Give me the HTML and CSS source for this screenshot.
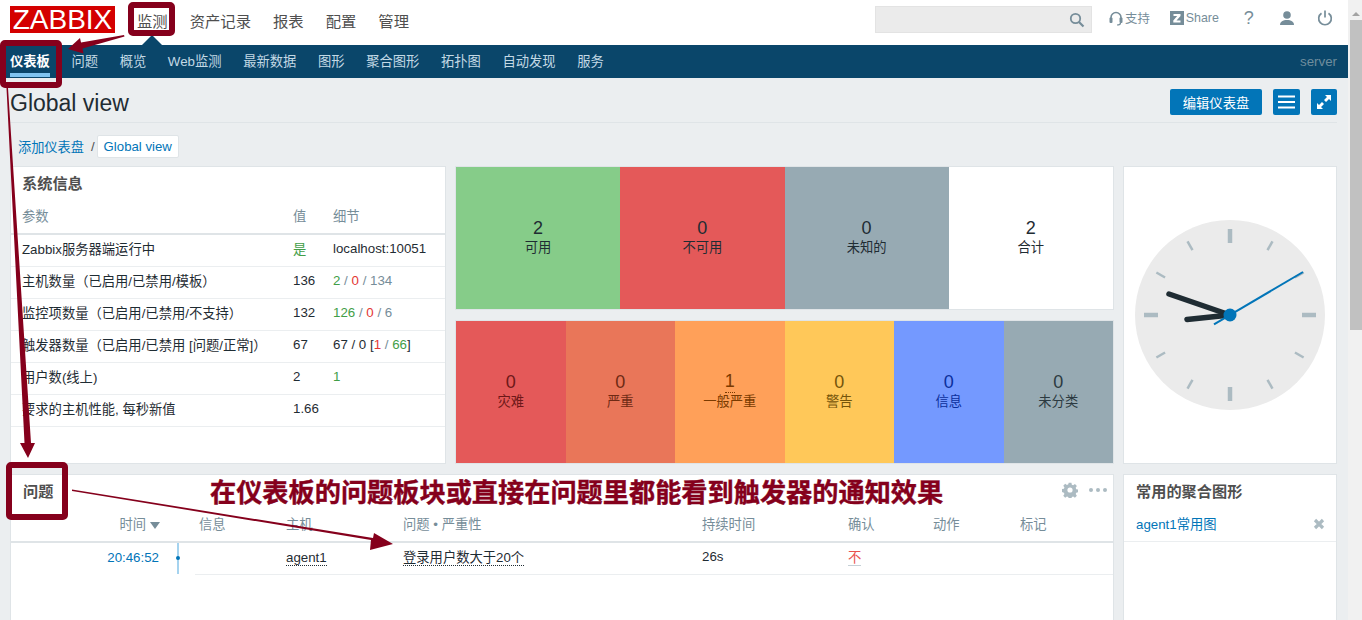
FILE: index.html
```html
<!DOCTYPE html>
<html lang="zh-CN">
<head>
  <meta charset="UTF-8">
  <title>Global view - Zabbix</title>
  <link rel="stylesheet" href="styles.css">
</head>
<body>

  <div id="page">
    <div id="top-bar">
      <div class="logo">ZABBIX</div>
      <div class="top-menu">
        <a class="top-item selected">监测</a>
        <a class="top-item">资产记录</a>
        <a class="top-item">报表</a>
        <a class="top-item">配置</a>
        <a class="top-item">管理</a>
      </div>
      <div class="search-box">
        <svg class="search-icon" width="16" height="16" viewBox="0 0 16 16"><circle cx="6.5" cy="6.5" r="4.7" fill="none" stroke="#768d99" stroke-width="1.8"/><path d="M10 10l4.5 4.5" stroke="#768d99" stroke-width="2.2"/></svg>
      </div>
      <div class="top-tools">
        <a class="tool tool-support">
          <svg width="14" height="15" viewBox="0 0 14 15"><path d="M2 8V6.5a5 5 0 0 1 10 0V8" fill="none" stroke="#768d99" stroke-width="1.6"/><rect x="0.5" y="6.5" width="3" height="5.5" rx="1" fill="#768d99"/><rect x="10.5" y="6.5" width="3" height="5.5" rx="1" fill="#768d99"/><path d="M11.5 12c0 1.5-1.5 2-3.5 2" fill="none" stroke="#768d99" stroke-width="1.2"/></svg>
          支持
        </a>
        <a class="tool tool-share">
          <svg width="14" height="14" viewBox="0 0 14 14"><rect width="14" height="14" fill="#768d99"/><path d="M3.5 3h7v2L6.5 9.5h4V11.5h-7.2V9.5L7.2 5H3.5z" fill="#fff"/></svg>
          Share
        </a>
        <a class="tool-help">?</a>
        <a class="tool-icon">
          <svg width="16" height="15" viewBox="0 0 16 15"><circle cx="8" cy="4" r="3.8" fill="#768d99"/><path d="M1 14c0-3.500 3-5 7-5s7 1.500 7 5z" fill="#768d99"/></svg>
        </a>
        <a class="tool-icon">
          <svg width="16" height="16" viewBox="0 0 16 16"><path d="M4.500 3.200a6.300 6.300 0 1 0 7 0" fill="none" stroke="#768d99" stroke-width="1.700"/><path d="M8 0.500v7" stroke="#768d99" stroke-width="1.700"/></svg>
        </a>
      </div>
    </div>

    <div id="nav-bar">
      <a class="nav-item active">仪表板</a>
      <a class="nav-item">问题</a>
      <a class="nav-item">概览</a>
      <a class="nav-item">Web监测</a>
      <a class="nav-item">最新数据</a>
      <a class="nav-item">图形</a>
      <a class="nav-item">聚合图形</a>
      <a class="nav-item">拓扑图</a>
      <a class="nav-item">自动发现</a>
      <a class="nav-item">服务</a>
      <span class="server-name">server</span>
    </div>

    <div id="title-bar">
      <h1>Global view</h1>
      <div class="title-actions">
        <button class="btn btn-edit">编辑仪表盘</button>
        <button class="btn btn-icon">
          <svg width="17" height="14" viewBox="0 0 17 14"><path d="M0 1.500h17M0 7h17M0 12.500h17" stroke="#fff" stroke-width="2"/></svg>
        </button>
        <button class="btn btn-icon btn-full">
          <svg width="16" height="16" viewBox="0 0 16 16"><path d="M9 1h6v6l-2-2-3 3-2-2 3-3zM7 15H1V9l2 2 3-3 2 2-3 3z" fill="#fff"/></svg>
        </button>
      </div>
    </div>

    <div id="crumbs">
      <a class="crumb-link">添加仪表盘</a>
      <span class="crumb-sep">/</span>
      <a class="crumb-tab">Global view</a>
    </div>

    <div id="dashboard">
      <div class="panel panel-sys">
        <div class="panel-head">系统信息</div>
        <table class="sys-table">
          <colgroup><col class="c-param"><col class="c-value"><col></colgroup>
          <thead>
            <tr><th>参数</th><th>值</th><th>细节</th></tr>
          </thead>
          <tbody>
            <tr><td>Zabbix服务器端运行中</td><td class="green">是</td><td>localhost:10051</td></tr>
            <tr><td>主机数量（已启用/已禁用/模板）</td><td>136</td><td><span class="green">2</span> <span class="grey">/</span> <span class="red">0</span> <span class="grey">/ 134</span></td></tr>
            <tr><td>监控项数量（已启用/已禁用/不支持）</td><td>132</td><td><span class="green">126</span> <span class="grey">/</span> <span class="red">0</span> <span class="grey">/ 6</span></td></tr>
            <tr><td>触发器数量（已启用/已禁用 [问题/正常]）</td><td>67</td><td>67 / 0 [<span class="red">1</span> <span class="grey">/</span> <span class="green">66</span>]</td></tr>
            <tr><td>用户数(线上)</td><td>2</td><td class="green">1</td></tr>
            <tr><td>要求的主机性能, 每秒新值</td><td>1.66</td><td></td></tr>
          </tbody>
        </table>
      </div>

      <div class="panel tiles">
        <div class="tile t-green"><b>2</b><span>可用</span></div>
        <div class="tile t-red"><b>0</b><span>不可用</span></div>
        <div class="tile t-grey"><b>0</b><span>未知的</span></div>
        <div class="tile t-white"><b>2</b><span>合计</span></div>
      </div>

      <div class="panel panel-clock">
        <svg width="190" height="190" viewBox="-95 -95 190 190">
          <circle r="95" fill="#ebebeb"/>
          <g stroke="#acbbc2" stroke-width="4.500">
            <line y1="-86" y2="-72"/>
            <line x1="86" x2="72"/>
            <line y1="86" y2="72"/>
            <line x1="-86" x2="-72"/>
          </g>
          <g stroke="#acbbc2" stroke-width="2.500">
            <line y1="-85" y2="-75" transform="rotate(30)"/>
            <line y1="-85" y2="-75" transform="rotate(60)"/>
            <line y1="-85" y2="-75" transform="rotate(120)"/>
            <line y1="-85" y2="-75" transform="rotate(150)"/>
            <line y1="-85" y2="-75" transform="rotate(210)"/>
            <line y1="-85" y2="-75" transform="rotate(240)"/>
            <line y1="-85" y2="-75" transform="rotate(300)"/>
            <line y1="-85" y2="-75" transform="rotate(330)"/>
          </g>
          <g stroke="#1f2c33" stroke-width="5.500" stroke-linecap="round">
            <line x2="-61" y2="-21"/>
            <line x2="-43" y2="4.500"/>
          </g>
          <line x1="-16" y1="9.300" x2="73" y2="-43" stroke="#0275b8" stroke-width="2"/>
          <circle r="6.500" fill="#0275b8"/>
        </svg>
      </div>

      <div class="panel tiles tiles-sev">
        <div class="tile s-disaster"><b>0</b><span>灾难</span></div>
        <div class="tile s-high"><b>0</b><span>严重</span></div>
        <div class="tile s-average"><b class="dotted">1</b><span>一般严重</span></div>
        <div class="tile s-warning"><b>0</b><span>警告</span></div>
        <div class="tile s-info"><b>0</b><span>信息</span></div>
        <div class="tile s-none"><b>0</b><span>未分类</span></div>
      </div>

      <div class="panel panel-problems">
        <div class="panel-head head-tools">
          问题
          <div class="head-icons">
            <svg width="16" height="16" viewBox="0 0 16 16"><path d="M6.500 0h3l.4 2.200 1.500.6L13.300 1.500l2.100 2.100-1.300 1.900.6 1.500 2.200.4v3l-2.200.4-.6 1.500 1.300 1.900-2.100 2.100-1.900-1.300-1.500.6-.4 2.200h-3l-.4-2.200-1.500-.6-1.900 1.300-2.100-2.100 1.300-1.900-.6-1.500L-.9 10V7l2.200-.4.6-1.500L.6 3.200 2.700 1.100l1.900 1.300 1.500-.6z" transform="translate(.7 .7) scale(.92)" fill="#acbbc2"/><circle cx="8" cy="8" r="2.600" fill="#fff"/></svg>
            <svg width="18" height="4" viewBox="0 0 18 4"><circle cx="2" cy="2" r="2" fill="#acbbc2"/><circle cx="9" cy="2" r="2" fill="#acbbc2"/><circle cx="16" cy="2" r="2" fill="#acbbc2"/></svg>
          </div>
        </div>
        <table class="prob-table">
          <colgroup>
            <col class="p-time"><col class="p-line"><col class="p-info"><col class="p-host"><col class="p-name"><col class="p-dur"><col class="p-ack"><col class="p-act"><col>
          </colgroup>
          <thead>
            <tr>
              <th class="time-cell">时间<i class="sort-down"></i></th>
              <th></th>
              <th class="info-cell">信息</th>
              <th>主机</th>
              <th>问题 • 严重性</th>
              <th>持续时间</th>
              <th>确认</th>
              <th>动作</th>
              <th>标记</th>
            </tr>
          </thead>
          <tbody>
            <tr>
              <td class="time-cell plain"><a class="link">20:46:52</a></td>
              <td class="line-cell plain"><div class="timeline"></div></td>
              <td></td>
              <td class="host-cell"><span class="dot-link">agent1</span></td>
              <td><span class="dot-link">登录用户数大于20个</span></td>
              <td>26s</td>
              <td><span class="ack-no">不</span></td>
              <td></td>
              <td></td>
            </tr>
          </tbody>
        </table>
      </div>

      <div class="panel panel-favs">
        <div class="panel-head">常用的聚合图形</div>
        <div class="fav-row">
          <a class="link">agent1常用图</a>
          <svg width="12" height="12" viewBox="0 0 12 12"><path d="M2 2l8 8M10 2l-8 8" stroke="#acbbc2" stroke-width="3.200"/></svg>
        </div>
      </div>
    </div>
  </div>

  <div id="scrollbar">
    <div class="scroll-up"></div>
    <div class="scroll-thumb"></div>
  </div>

  <!-- red notes drawn over the screenshot -->
  <svg id="notes" width="1362" height="620" viewBox="0 0 1362 620">
    <g fill="none" stroke="#85001c" stroke-width="6">
      <rect x="131" y="5" width="41" height="28" rx="2"/>
      <rect x="3" y="43" width="56" height="42" rx="2"/>
      <rect x="9" y="465" width="56" height="52" rx="2"/>
    </g>
    <g fill="#85001c">
      <path d="M124 35l.5 1.500-42 12 1 5-15.500-4.500 12-11 1 4.500z"/>
      <path d="M6.500 88h1.500l23 355h4l-7 15-8-15h4.500z"/>
      <path d="M72 489.500v1.500l299 49-1 10 23-6-19-11-1 5z"/>
    </g>
  </svg>
  <div id="note-text">在仪表板的问题板块或直接在问题里都能看到触发器的通知效果</div>

</body>
</html>
```

FILE: styles.css
```css
* {
  box-sizing: border-box;
  margin: 0;
  padding: 0;
}

html, body {
  height: 100%;
  overflow: hidden;
}

body {
  display: flex;
  background: #ebeef0;
  color: #1f2c33;
  font-family: "Liberation Sans", "Noto Sans CJK SC", sans-serif;
  font-size: 13.3px;
}

#page {
  width: 1348px;
  flex: none;
  height: 620px;
  overflow: hidden;
}

/* top bar */
#top-bar {
  height: 45px;
  background: #fff;
  display: flex;
  align-items: flex-start;
  padding-left: 10px;
}

.logo {
  width: 105px;
  height: 27px;
  margin-top: 6px;
  background: #d40000;
  color: #fff;
  font-size: 28px;
  line-height: 27px;
  text-align: center;
}

.top-menu {
  display: flex;
  gap: 22px;
  margin-left: 22px;
  padding-top: 13px;
}

.top-item {
  font-size: 15.33px;
  line-height: 18px;
  color: #4f4f4f;
}

.search-box {
  width: 217px;
  height: 27px;
  margin-top: 6px;
  margin-left: auto;
  background: #ebebeb;
  border: 1px solid #e3e3e3;
  display: flex;
  align-items: center;
  justify-content: flex-end;
  padding-right: 6px;
}

.top-tools {
  width: 256px;
  height: 36px;
  display: flex;
  align-items: center;
  padding-left: 17px;
  color: #768d99;
  font-size: 12.4px;
  white-space: nowrap;
}

.tool {
  display: flex;
  align-items: center;
  gap: 2px;
}

.tool-share {
  margin-left: 20px;
}

.tool-help {
  margin-left: 25px;
  font-size: 18px;
}

.tool-icon {
  display: flex;
  margin-left: 22px;
}

.tool-help + .tool-icon {
  margin-left: 25px;
}

/* blue menu */
#nav-bar {
  height: 33px;
  background: #0a466a;
  display: flex;
  padding: 0 11px 0 10px;
  gap: 21.6px;
  position: relative;
}

#nav-bar::before {
  content: "";
  position: absolute;
  left: 142px;
  top: -10px;
  border: 10px solid transparent;
  border-top: 0;
  border-bottom-color: #0a466a;
}

.nav-item {
  color: #c3d9e5;
  line-height: 33px;
}

.nav-item.active {
  color: #fff;
  font-weight: bold;
  height: 32px;
  border-bottom: 4px solid #7fc4f0;
}

.server-name {
  margin-left: auto;
  color: #6f8d9d;
  line-height: 33px;
}

/* title */
#title-bar {
  height: 45px;
  margin: 0 11px 0 10px;
  border-bottom: 1px solid #dfe4e7;
  display: flex;
  align-items: flex-start;
  justify-content: space-between;
}

#title-bar h1 {
  font-size: 23px;
  font-weight: normal;
  line-height: 28px;
  margin-top: 11px;
}

.title-actions {
  display: flex;
  gap: 11px;
  padding-top: 11px;
}

.btn {
  height: 26px;
  border: none;
  border-radius: 2px;
  background: #0275b8;
  color: #fff;
  font: inherit;
  display: flex;
  align-items: center;
  justify-content: center;
}

.btn-edit {
  width: 92px;
}

.btn-icon {
  width: 27px;
}

.btn-full {
  width: 26px;
}

#crumbs {
  display: flex;
  align-items: center;
  height: 22px;
  margin-top: 12px;
  padding-left: 18px;
  font-size: 13.2px;
}

.crumb-link, .link {
  color: #0275b8;
}

.crumb-sep {
  margin: 0 2px 0 7px;
  color: #4f4f4f;
}

.crumb-tab {
  height: 23px;
  line-height: 21px;
  padding: 0 6px;
  background: #fff;
  border: 1px solid #dfe4e7;
  border-radius: 2px;
  color: #0275b8;
}

/* dashboard grid */
#dashboard {
  display: grid;
  grid-template-columns: 436px 659px 214px;
  grid-template-rows: 144px 144px 200px;
  column-gap: 9px;
  row-gap: 10px;
  padding-left: 10px;
  margin-top: 9px;
}

.panel {
  background: #fff;
  border: 1px solid #dfe4e7;
}

.panel-head {
  height: 33px;
  padding-left: 11px;
  line-height: 34px;
  font-size: 15.2px;
  font-weight: bold;
  color: #4f4f4f;
}

.panel-sys, .panel-clock {
  grid-row: span 2;
}

.panel-clock {
  display: flex;
  align-items: center;
  justify-content: center;
}

.panel-problems {
  grid-column: span 2;
  order: 1;
}

.panel-favs {
  order: 1;
}

/* tables */
table {
  width: 100%;
  border-collapse: collapse;
  table-layout: fixed;
}

th {
  text-align: left;
  font-weight: normal;
  color: #768d99;
  padding: 0 0 3px 10px;
  border-bottom: 2px solid #dfe4e7;
}

td {
  padding: 0 0 3px 10px;
  border-bottom: 1px solid #ebeef0;
  white-space: nowrap;
}

.sys-table th {
  height: 34px;
}

.sys-table td {
  height: 32px;
}

.sys-table th:first-child, .sys-table td:first-child {
  padding-left: 11px;
}

.c-param {
  width: 272px;
}

.c-value {
  width: 40px;
}

.green {
  color: #429e47;
}

.red {
  color: #e33734;
}

.grey {
  color: #768d99;
}

/* status tiles */
.tiles {
  display: flex;
}

.tile {
  flex: 1;
  display: flex;
  flex-direction: column;
  align-items: center;
  justify-content: center;
  padding-bottom: 2px;
}

.tile b {
  font-size: 18px;
  font-weight: normal;
  line-height: 22px;
}

.tile span {
  line-height: 18px;
}

.tile .dotted {
  height: 22px;
  line-height: 20px;
  border-bottom: 1px dotted #7a3a00;
}

.t-green { background: #86cc89; }
.t-red { background: #e45959; }
.t-grey { background: #97aab3; }
.t-white { background: #fff; }

.s-disaster { background: #e45959; color: #6d1818; }
.s-high { background: #e97659; color: #6e2a14; }
.s-average { background: #ffa059; color: #7a3a00; }
.s-warning { background: #ffc859; color: #75540a; }
.s-info { background: #7499ff; color: #0b2f9c; }
.s-none { background: #97aab3; color: #2c3a41; }

/* problems */
.head-tools {
  display: flex;
  justify-content: space-between;
  padding-left: 12px;
  padding-right: 6px;
}

.head-icons {
  display: flex;
  align-items: center;
  gap: 11px;
  height: 30px;
}

.prob-table th {
  height: 34px;
}

.prob-table td {
  height: 31px;
}

.p-time { width: 159px; }
.p-line { width: 25px; }
.p-info { width: 81px; }
.p-host { width: 117px; }
.p-name { width: 299px; }
.p-dur { width: 146px; }
.p-ack { width: 85px; }
.p-act { width: 87px; }

.prob-table .time-cell {
  text-align: right;
  padding-right: 10px;
}

.prob-table td.time-cell {
  padding-right: 11px;
}

.prob-table .info-cell {
  padding-left: 4px;
}

.prob-table .plain {
  border-bottom: none;
}

.prob-table .line-cell {
  padding: 0;
}

.prob-table .host-cell {
  padding-bottom: 1px;
}

.timeline {
  width: 2px;
  height: 31px;
  margin-left: 7px;
  background: #a5d3ef;
  position: relative;
}

.timeline::after {
  content: "";
  position: absolute;
  left: -1px;
  top: 13px;
  width: 4px;
  height: 4px;
  border-radius: 50%;
  background: #0275b8;
}

.sort-down {
  display: inline-block;
  margin-left: 4px;
  border: 5px solid transparent;
  border-bottom: 0;
  border-top: 7px solid #768d99;
}

.dot-link {
  border-bottom: 1px dotted #1f2c33;
}

.ack-no {
  color: #e9524f;
  border-bottom: 1px solid #c5d0d6;
}

/* favourites */
.fav-row {
  height: 34px;
  padding: 0 11px 2px 12px;
  border-bottom: 1px solid #ebeef0;
  display: flex;
  align-items: center;
  justify-content: space-between;
}

.panel-favs .panel-head {
  padding-left: 12px;
}

/* scrollbar */
#scrollbar {
  flex: 1;
  height: 620px;
  background: #f1f1f1;
  padding-left: 2px;
}

.scroll-up {
  height: 12px;
  width: 0;
  margin-left: 2px;
  border: 4px solid transparent;
  border-top: 0;
  border-bottom: 4px solid #a3a3a3;
  position: relative;
  top: 4px;
}

.scroll-thumb {
  height: 310px;
  margin-top: 8px;
  background: #c1c1c1;
}

/* red notes */
#notes {
  position: absolute;
  left: 0;
  top: 0;
  pointer-events: none;
}

#note-text {
  position: absolute;
  left: 210px;
  top: 475px;
  color: #85001c;
  font-size: 26.2px;
  line-height: 36px;
  font-weight: bold;
  -webkit-text-stroke: 0.4px #85001c;
  white-space: nowrap;
}
```
